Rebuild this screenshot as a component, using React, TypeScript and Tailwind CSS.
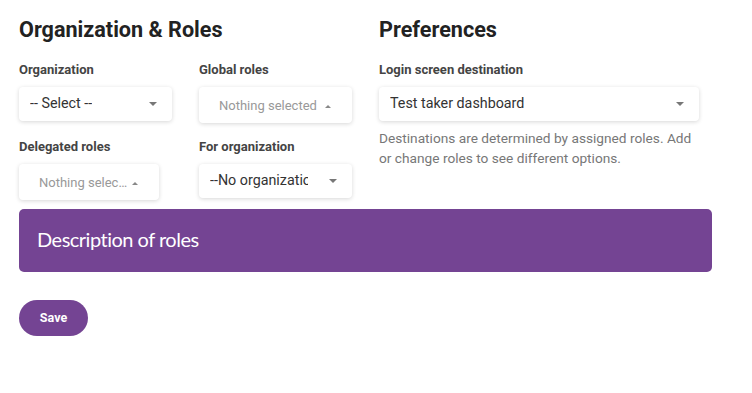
import React from 'react';

const Caret = ({ up = false }: { up?: boolean }) => (
    <svg width={up ? 6 : 8} height={up ? 3 : 4} viewBox={up ? '0 0 6 3' : '0 0 8 4'} className="shrink-0">
        {up ? <path d="M0 3 L3 0 L6 3 Z" fill="#888" /> : <path d="M0 0 L8 0 L4 4 Z" fill="#777" />}
    </svg>
);

const NormalSelect = ({ value, width, textWidth }: { value: string; width: string; textWidth?: string }) => (
    <div className={`${width} h-[34px] flex items-center rounded-[4px] bg-white shadow-[0_1px_4px_rgba(0,0,0,0.16)] pl-[11px] pr-[15px]`}>
        <span className={`${textWidth ?? 'shrink-0'} overflow-hidden whitespace-nowrap text-[14.3px] text-[#333]`}>{value}</span>
        <span className="flex-1" />
        <Caret />
    </div>
);

const MultiSelect = ({ value, width }: { value: string; width: string }) => (
    <div className={`${width} h-[36px] flex items-center rounded-[4px] bg-white shadow-[0_1px_4px_rgba(0,0,0,0.16)] pl-5 pr-[21px] pt-[2px]`}>
        <span className="flex-1 overflow-hidden text-ellipsis whitespace-nowrap text-[13px] text-[#999] pr-[2px]">{value}</span>
        <Caret up />
    </div>
);

const Label = ({ children }: { children: React.ReactNode }) => (
    <div className="text-[13px] font-bold text-[#444] mb-[10px] leading-[14px]">{children}</div>
);

export default function App() {
    return (
        <div className="w-[752px] h-[393px] bg-white pl-[19px] pt-[17px] font-['Roboto',sans-serif]">
            <div className="flex gap-[27px] w-[693px]">
                <div className="w-[333px]">
                    <h2 className="text-[21.6px] font-bold text-[#222] leading-[26px] mb-[20px]">Organization &amp; Roles</h2>
                    <div className="grid grid-cols-[153px_153px] gap-x-[27px] gap-y-[17px]">
                        <div>
                            <Label>Organization</Label>
                            <NormalSelect value="-- Select --" width="w-[153px]" />
                        </div>
                        <div>
                            <Label>Global roles</Label>
                            <MultiSelect value="Nothing selected" width="w-[153px]" />
                        </div>
                        <div>
                            <Label>Delegated roles</Label>
                            <MultiSelect value="Nothing selected" width="w-[140px]" />
                        </div>
                        <div>
                            <Label>For organization</Label>
                            <NormalSelect value="--No organization--" width="w-[153px]" textWidth="w-[98px]" />
                        </div>
                    </div>
                </div>
                <div className="w-[333px]">
                    <h2 className="text-[21.6px] font-bold text-[#222] leading-[26px] mb-[20px]">Preferences</h2>
                    <Label>Login screen destination</Label>
                    <NormalSelect value="Test taker dashboard" width="w-[320px]" />
                    <p className="mt-[7px] w-[320px] text-[13.7px] leading-[20px] text-[#777]">
                        Destinations are determined by assigned roles. Add or change roles to see different options.
                    </p>
                </div>
            </div>

            <div className="mt-[9px] w-[693px] h-[63px] rounded-[5px] bg-[#744493] flex items-center px-[18px]">
                <span className="text-white text-[20px] tracking-[-0.5px] font-['Lato',sans-serif] -mt-[3px]">Description of roles</span>
            </div>

            <button className="mt-[28px] w-[69px] h-[36px] rounded-full bg-[#744493] text-white text-[12.5px] font-bold">
                Save
            </button>
        </div>
    );
}
